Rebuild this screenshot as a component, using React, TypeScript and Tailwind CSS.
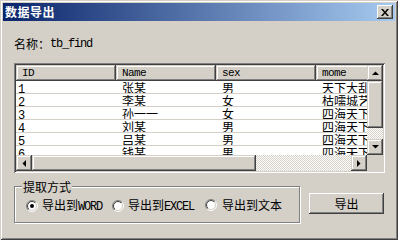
import React from "react";

const raised =
  "shadow-[inset_-1px_-1px_#404040,inset_1px_1px_#d4d0c8,inset_-2px_-2px_#808080,inset_2px_2px_#ffffff]";
const btnRaised =
  "shadow-[inset_-1px_-1px_#404040,inset_1px_1px_#ffffff,inset_-2px_-2px_#808080,inset_2px_2px_#d4d0c8]";
const dotted =
  "bg-[repeating-conic-gradient(#d4d0c8_0_25%,#ffffff_0_50%)] bg-[length:2px_2px]";

function Txt({ s }: { s: string }) {
  const parts = s.match(/[\x00-\x7f]+|[^\x00-\x7f]+/g) ?? [];
  return (
    <>
      {parts.map((p, i) =>
        /^[\x00-\x7f]/.test(p) ? (
          <span key={i} className="font-['Liberation_Mono',monospace] text-[12px] tracking-[-1.2px]">
            {p}
          </span>
        ) : (
          <span key={i}>{p}</span>
        )
      )}
    </>
  );
}

function Arrow({ dir }: { dir: "up" | "down" | "left" | "right" }) {
  if (dir === "up" || dir === "down")
    return (
      <svg width="7" height="4" viewBox="0 0 7 4">
        <polygon points={dir === "up" ? "0,4 7,4 3.5,0.5" : "0,0 7,0 3.5,3.5"} fill="#000" />
      </svg>
    );
  return (
    <svg width="4" height="7" viewBox="0 0 4 7">
      <polygon points={dir === "left" ? "4,0 4,7 0.5,3.5" : "0,0 0,7 3.5,3.5"} fill="#000" />
    </svg>
  );
}

function Radio({ checked }: { checked?: boolean }) {
  return (
    <svg width="12" height="12" viewBox="0 0 12 12" className="shrink-0">
      <defs>
        <linearGradient id="ro" x1="0" y1="0" x2="1" y2="1">
          <stop offset="0.5" stopColor="#808080" />
          <stop offset="0.5" stopColor="#ffffff" />
        </linearGradient>
        <linearGradient id="ri" x1="0" y1="0" x2="1" y2="1">
          <stop offset="0.5" stopColor="#404040" />
          <stop offset="0.5" stopColor="#d4d0c8" />
        </linearGradient>
      </defs>
      <circle cx="6" cy="6" r="5.5" fill="none" stroke="url(#ro)" />
      <circle cx="6" cy="6" r="4.5" fill="#ffffff" stroke="url(#ri)" />
      {checked && <circle cx="6" cy="6" r="2" fill="#000" />}
    </svg>
  );
}

const rows = [
  ["1", "张某", "男", "天下大乱"],
  ["2", "李某", "女", "枯嚅城艺"],
  ["3", "孙一一", "女", "四海天下"],
  ["4", "刘某", "男", "四海天下"],
  ["5", "吕某", "男", "四海天下"],
  ["6", "钱某", "男", "四海天下"],
];

const headers = ["ID", "Name", "sex", "mome"];

export default function App() {
  return (
    <div
      className={`w-[398px] h-[240px] bg-[#d4d0c8] p-[3px] flex flex-col font-['Noto_Sans_CJK_SC',sans-serif] text-[12px] leading-[12px] text-black shadow-[inset_1px_1px_#d4d0c8,inset_-1px_-1px_#404040,inset_2px_2px_#ffffff,inset_-2px_-2px_#808080]`}
    >
      {/* title bar */}
      <div className="h-[18px] shrink-0 flex items-center justify-between pl-[2px] pr-[2px] bg-[linear-gradient(to_right,#0a246a,#a6caf0)]">
        <span className="text-white font-bold text-[12px] leading-[12px] tracking-[0.5px]">数据导出</span>
        <button className={`w-[16px] h-[14px] bg-[#d4d0c8] flex items-center justify-center ${btnRaised}`}>
          <svg width="8" height="7" viewBox="0 0 8 7">
            <path d="M0 0h2l2 2.4 2-2.4h2l-3 3.5 3 3.5h-2l-2-2.4-2 2.4h-2l3-3.5z" fill="#000" />
          </svg>
        </button>
      </div>

      <div className="flex flex-col px-[11px]">
        <div className="mt-[17px] h-[12px] flex items-center">
          <Txt s="名称：tb_find" />
        </div>

        {/* grid */}
        <div className="mt-[13px] w-[371px] h-[110px] p-[2px] bg-white shadow-[inset_1px_1px_#808080,inset_-1px_-1px_#ffffff,inset_2px_2px_#404040,inset_-2px_-2px_#d4d0c8]">
          <div className="flex h-[90px]">
            <div className="w-[351px] overflow-hidden flex flex-col">
              <div className="flex h-[16px] shrink-0">
                {headers.map((h) => (
                  <div
                    key={h}
                    className={`w-[100px] shrink-0 h-[16px] bg-[#d4d0c8] pl-[6px] flex items-center ${raised}`}
                  >
                    <span className="font-['Liberation_Mono',monospace] text-[11px] tracking-[-0.6px]">{h}</span>
                  </div>
                ))}
              </div>
              {rows.map((r) => (
                <div key={r[0]} className="flex h-[13px] shrink-0 border-b border-[#d4d0c8]">
                  {r.map((c, i) => (
                    <div
                      key={i}
                      className={`w-[100px] shrink-0 whitespace-nowrap overflow-hidden pt-[1px] ${i === 0 ? "pl-[2px]" : "pl-[6px]"}`}
                    >
                      <Txt s={c} />
                    </div>
                  ))}
                </div>
              ))}
            </div>
            {/* vertical scrollbar */}
            <div className="w-[16px] flex flex-col bg-[#d4d0c8]">
              <div className={`h-[16px] flex items-center justify-center ${raised}`}>
                <Arrow dir="up" />
              </div>
              <div className={`h-[47px] ${raised}`} />
              <div className={`flex-1 ${dotted}`} />
              <div className={`h-[16px] flex items-center justify-center ${raised}`}>
                <Arrow dir="down" />
              </div>
            </div>
          </div>
          {/* horizontal scrollbar */}
          <div className="flex h-[16px]">
            <div className={`w-[16px] bg-[#d4d0c8] flex items-center justify-center ${raised}`}>
              <Arrow dir="left" />
            </div>
            <div className={`w-[224px] bg-[#d4d0c8] ${raised}`} />
            <div className={`flex-1 ${dotted}`} />
            <div className={`w-[16px] bg-[#d4d0c8] flex items-center justify-center ${raised}`}>
              <Arrow dir="right" />
            </div>
            <div className="w-[16px] bg-[#d4d0c8]" />
          </div>
        </div>

        {/* bottom */}
        <div className="flex mt-[13px]">
          <div className="relative w-[286px] h-[37px] border border-[#808080] shadow-[inset_1px_1px_#ffffff,1px_1px_#ffffff] flex items-start pl-[11px] pt-[12px]">
            <span className="absolute -top-[6px] left-[7px] px-[1px] bg-[#d4d0c8] leading-[12px]">提取方式</span>
            <div className="flex items-center gap-[4px] w-[86px]">
              <Radio checked />
              <span className="whitespace-nowrap">
                <Txt s="导出到WORD" />
              </span>
            </div>
            <div className="flex items-center gap-[4px] w-[93px]">
              <Radio />
              <span className="whitespace-nowrap">
                <Txt s="导出到EXCEL" />
              </span>
            </div>
            <div className="flex items-center gap-[5px]">
              <Radio />
              <span className="whitespace-nowrap">导出到文本</span>
            </div>
          </div>
          <button
            className={`ml-[9px] mt-[7px] w-[75px] h-[21px] bg-[#d4d0c8] flex items-center justify-center ${btnRaised}`}
          >
            导出
          </button>
        </div>
      </div>
    </div>
  );
}
